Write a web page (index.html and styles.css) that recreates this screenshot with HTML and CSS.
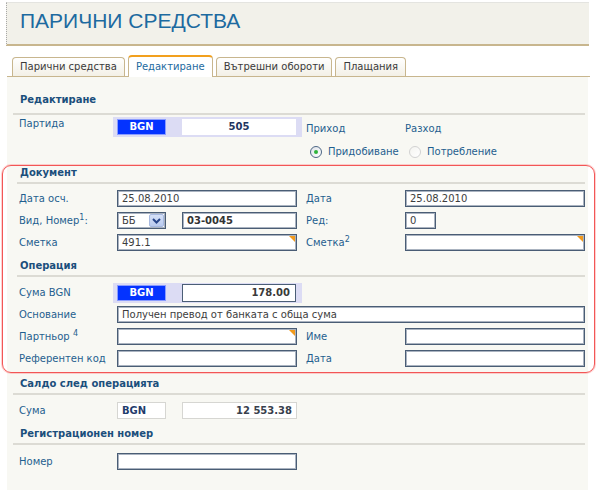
FILE: index.html
```html
<!DOCTYPE html>
<html lang="bg">
<head>
<meta charset="utf-8">
<title>Парични средства</title>
<link rel="stylesheet" href="styles.css">
</head>
<body>
<header class="titlebar"><h1>ПАРИЧНИ СРЕДСТВА</h1></header>
<nav class="tabs">
  <span class="tab">Парични средства</span>
  <span class="tab active">Редактиране</span>
  <span class="tab">Вътрешни обороти</span>
  <span class="tab">Плащания</span>
</nav>
<main class="panel">
  <h2 class="sec first">Редактиране</h2>
  <div class="row row-top">
    <span class="lbl">Партида</span>
    <div class="band"><span class="cur">BGN</span><span class="amt amt-c">505</span></div>
    <div class="io"><span class="lbl">Приход</span><span class="radio"><span class="rb on"></span>Придобиване</span></div>
    <div class="io"><span class="lbl">Разход</span><span class="radio"><span class="rb"></span>Потребление</span></div>
  </div>

  <section class="box">
    <h2 class="sec">Документ</h2>
    <div class="rows first-rows">
      <div class="row">
        <span class="lbl">Дата осч.</span>
        <span class="inp">25.08.2010</span>
        <span class="lbl">Дата</span>
        <span class="inp">25.08.2010</span>
      </div>
      <div class="row">
        <span class="lbl">Вид, Номер<sup>1</sup>:</span>
        <div class="pair">
          <span class="sel"><span>ББ</span><span class="sel-btn"><svg width="9" height="6" viewBox="0 0 9 6"><polyline points="1,1 4.5,4.5 8,1" fill="none" stroke="#27458a" stroke-width="2"/></svg></span></span>
          <span class="inp inp-num">03-0045</span>
        </div>
        <span class="lbl">Ред:</span>
        <span class="inp narrow">0</span>
      </div>
      <div class="row">
        <span class="lbl">Сметка</span>
        <span class="inp tri">491.1</span>
        <span class="lbl">Сметка<sup>2</sup></span>
        <span class="inp tri"></span>
      </div>
    </div>

    <h2 class="sec sec-gap">Операция</h2>
    <div class="row row-band">
      <span class="lbl">Сума BGN</span>
      <div class="band"><span class="cur">BGN</span><span class="amt amt-r bordered">178.00</span></div>
    </div>
    <div class="rows after-band">
      <div class="row">
        <span class="lbl">Основание</span>
        <span class="inp wide">Получен превод от банката с обща сума</span>
      </div>
      <div class="row">
        <span class="lbl">Партньор <sup>4</sup></span>
        <span class="inp tri"></span>
        <span class="lbl">Име</span>
        <span class="inp"></span>
      </div>
      <div class="row">
        <span class="lbl">Референтен код</span>
        <span class="inp"></span>
        <span class="lbl">Дата</span>
        <span class="inp"></span>
      </div>
    </div>
  </section>

  <h2 class="sec after-box">Салдо след операцията</h2>
  <div class="row row-gap">
    <span class="lbl">Сума</span>
    <div class="pair">
      <span class="ro ro-cur">BGN</span>
      <span class="ro ro-val">12 553.38</span>
    </div>
  </div>

  <h2 class="sec sec-gap">Регистрационен номер</h2>
  <div class="row row-gap2">
    <span class="lbl">Номер</span>
    <span class="inp"></span>
  </div>
</main>
</body>
</html>
```

FILE: styles.css
```css
* { box-sizing: border-box; margin: 0; padding: 0; }
html, body { background: #fff; }
body {
  font-family: "DejaVu Sans", Verdana, sans-serif;
  font-size: 10px;
  color: #333;
  width: 596px;
  height: 493px;
  overflow: hidden;
}

.titlebar {
  margin: 2px 7px 0 6px;
  height: 44px;
  background: #f2f1ea;
  border-top: 1px solid #e4e4e0;
  border-left: 1px dotted #a8a8a8;
  border-bottom: 2px solid #c8b68e;
  padding: 6px 0 0 13px;
}
.titlebar h1 {
  font-family: "Liberation Sans", Arial, sans-serif;
  font-weight: normal;
  font-size: 21px;
  line-height: 24px;
  color: #1d6aa0;
}

.tabs {
  display: flex;
  align-items: flex-end;
  gap: 3px;
  margin: 9px 6px 0 7px;
  padding-left: 5px;
  height: 22px;
  border-bottom: 1px solid #c8b68e;
}
.tab {
  height: 19px;
  line-height: 18px;
  padding: 0 7px;
  border: 1px solid #c8b68e;
  border-bottom: none;
  border-radius: 4px 4px 0 0;
  background: linear-gradient(#ffffff, #f3f0e6);
  color: #3a3a3a;
  white-space: nowrap;
}
.tab.active {
  height: 22px;
  margin-bottom: -1px;
  line-height: 19px;
  border-top: 2px solid #f2a01e;
  background: #fff;
  color: #1d6aa0;
  padding: 0 7px;
}

.panel {
  margin: 0 8px 0 7px;
  height: 413px;
  background: #f8f8f3;
  padding: 16px 3px 0 6px;
}

.sec {
  font-size: 10px;
  font-weight: bold;
  color: #1b4f7c;
  line-height: 14px;
  padding: 0 0 2px 7px;
  border-bottom: 2px solid #dcdbd4;
}
.sec.first { padding-bottom: 6px; }
.sec-gap { margin-top: 8px; }
.after-box { margin-top: 4px; }

.row {
  display: grid;
  grid-template-columns: 98px 189px 99px 180px;
  align-items: center;
  padding-left: 6px;
  min-height: 17px;
}
.rows { display: flex; flex-direction: column; gap: 5px; }
.first-rows { margin-top: 6px; }
.after-band { margin-top: 3px; }
.row-gap { margin-top: 7px; }
.row-gap2 { margin-top: 8px; }

.lbl {
  color: #1f5f8f;
  line-height: 14px;
  white-space: nowrap;
}
.lbl sup { font-size: 8px; line-height: 0; vertical-align: 4px; }

.row-top { align-items: start; }
.row-top > .lbl { margin-top: 2px; }
.row-top .band { margin-top: 2px; }
.io {
  display: flex;
  flex-direction: column;
  gap: 9px;
  margin-top: 7px;
}
.radio {
  display: flex;
  align-items: center;
  gap: 6px;
  margin-left: 4px;
  line-height: 14px;
  color: #1f5f8f;
  white-space: nowrap;
}
.rb {
  width: 12px;
  height: 12px;
  border-radius: 50%;
  border: 1px solid #d2d2d2;
  background: linear-gradient(135deg, #f4f4f0, #ffffff);
  position: relative;
}
.rb.on { border-color: #4c6684; background: linear-gradient(135deg, #dfe3e8, #ffffff); }
.rb.on::after {
  content: "";
  position: absolute;
  left: 3px;
  top: 3px;
  width: 4px;
  height: 4px;
  border-radius: 50%;
  background: #2fb33a;
}

.band {
  display: flex;
  align-items: center;
  gap: 16px;
  margin-left: -4px;
  width: 189px;
  height: 20px;
  padding: 0 6px 0 4px;
  background: #dcdcf4;
}
.cur {
  width: 49px;
  height: 16px;
  line-height: 14px;
  text-align: center;
  background: #0433ff;
  border: 1px solid #8a9cff;
  color: #fff;
  font-weight: bold;
}
.amt {
  flex: 1;
  height: 16px;
  line-height: 14px;
  background: #fff;
  border: 1px solid #fff;
  font-weight: bold;
  color: #1f3560;
}
.amt-c { text-align: center; }
.amt-r { text-align: right; padding-right: 5px; color: #3a3a3a; }
.amt.bordered { height: 18px; line-height: 16px; border-color: #4b5e76; }

.inp {
  position: relative;
  display: block;
  width: 180px;
  height: 17px;
  line-height: 15px;
  padding: 0 4px;
  border: 1px solid #4a5d75;
  box-shadow: inset 0 0 0 1px #aab3c0;
  background: #fff;
  color: #3d3d3d;
  white-space: nowrap;
  overflow: hidden;
}
.inp.narrow { width: 31px; }
.inp.wide { grid-column: 2 / 5; width: 468px; }
.inp-num { width: 115px; font-weight: bold; color: #333; }
.tri::after {
  content: "";
  position: absolute;
  top: 1px;
  right: 1px;
  border-style: solid;
  border-width: 0 6px 6px 0;
  border-color: transparent #f29a1c transparent transparent;
}

.pair { display: flex; gap: 16px; align-items: center; }
.sel {
  width: 49px;
  height: 17px;
  display: flex;
  align-items: center;
  justify-content: space-between;
  padding: 0 1px 0 4px;
  border: 1px solid #4a5d75;
  box-shadow: inset 0 0 0 1px #aab3c0;
  background: #fff;
  color: #3d3d3d;
}
.sel-btn {
  width: 15px;
  height: 13px;
  display: flex;
  align-items: center;
  justify-content: center;
  background: linear-gradient(#d6e1f7, #b9caee);
  border: 1px solid #a7b9e0;
  border-radius: 2px;
}

.ro {
  height: 17px;
  line-height: 15px;
  background: #fff;
  border: 1px solid #d6d6d2;
  font-weight: bold;
}
.ro-cur { width: 49px; padding-left: 4px; color: #1f3c6c; }
.ro-val { width: 115px; text-align: right; padding-right: 4px; color: #38404c; }

.box {
  margin: 6px -10px 0 -11px;
  padding: 0 9px 5px 14px;
  border: 1px solid #f25656;
  border-radius: 9px;
  box-shadow: 0 0 0 1px rgba(255, 150, 150, 0.45);
}
.box .sec { padding-left: 3px; }
.box .row { padding-left: 2px; }
.row-band { margin-top: 6px; }
```
